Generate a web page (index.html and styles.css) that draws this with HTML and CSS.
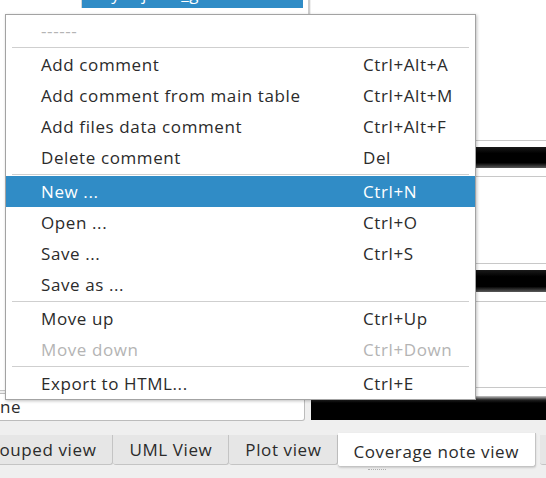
FILE: index.html
```html
<!DOCTYPE html>
<html>
<head>
<meta charset="utf-8">
<link rel="stylesheet" href="styles.css">
</head>
<body>
<div class="app">
  <div class="workspace">
    <div class="left">
      <div class="table">
        <div class="trow">
          <div class="cell c1">Status ▸</div>
          <div class="cell c2">Keyobjects_generator</div>
        </div>
      </div>
      <div class="field">ne</div>
    </div>
    <div class="right">
      <div class="blank h140"></div>
      <div class="rule"></div>
      <div class="blank h6"></div>
      <div class="bar h21"></div>
      <div class="blank h8"></div>
      <div class="rule"></div>
      <div class="blank h86"></div>
      <div class="rule"></div>
      <div class="blank h6"></div>
      <div class="bar h22"></div>
      <div class="blank h9"></div>
      <div class="rule"></div>
      <div class="blank h85"></div>
      <div class="rule"></div>
      <div class="blank h8"></div>
      <div class="bar bottom-bar"></div>
    </div>
  </div>
  <div class="tabs">
    <div class="tab first">Grouped view</div>
    <div class="tab">UML View</div>
    <div class="tab">Plot view</div>
    <div class="tab active">Coverage note view</div>
    <div class="tab">Text view</div>
  </div>
  <div class="handle"></div>

  <div class="menu">
    <div class="item disabled"><span>------</span><span></span></div>
    <div class="sep"></div>
    <div class="item"><span>Add comment</span><span>Ctrl+Alt+A</span></div>
    <div class="item"><span>Add comment from main table</span><span>Ctrl+Alt+M</span></div>
    <div class="item"><span>Add files data comment</span><span>Ctrl+Alt+F</span></div>
    <div class="item"><span>Delete comment</span><span>Del</span></div>
    <div class="sep"></div>
    <div class="item hot"><span>New ...</span><span>Ctrl+N</span></div>
    <div class="item"><span>Open ...</span><span>Ctrl+O</span></div>
    <div class="item"><span>Save ...</span><span>Ctrl+S</span></div>
    <div class="item"><span>Save as ...</span><span></span></div>
    <div class="sep"></div>
    <div class="item"><span>Move up</span><span>Ctrl+Up</span></div>
    <div class="item disabled"><span>Move down</span><span>Ctrl+Down</span></div>
    <div class="sep"></div>
    <div class="item"><span>Export to HTML...</span><span>Ctrl+E</span></div>
  </div>
</div>
</body>
</html>
```
FILE: styles.css
```css
* { box-sizing: border-box; }
html, body {
  margin: 0;
  padding: 0;
}
body {
  width: 546px;
  height: 478px;
  overflow: hidden;
  background: #efefef;
  font-family: "Open Sans", "Noto Sans", sans-serif;
  font-size: 17px;
  letter-spacing: 0.6px;
  color: #2b2b2b;
}
.app {
  position: relative;
  width: 546px;
  height: 478px;
  overflow: hidden;
}
.workspace {
  display: flex;
  height: 433px;
}
.left {
  width: 311px;
  display: flex;
  flex-direction: column;
}
.table {
  height: 391px;
  background: #fff;
  border-right: 2px solid #cdcdcd;
  border-bottom: 1px solid #c4c4c4;
  margin-right: 1px;
  overflow: hidden;
}
.trow {
  display: flex;
  height: 26px;
  margin-top: -18px;
}
.cell {
  height: 26px;
  line-height: 24px;
  white-space: nowrap;
  overflow: hidden;
}
.c1 {
  width: 82px;
  color: #b0b0b0;
  padding-left: 4px;
  border-right: 1px solid #d6d6d6;
}
.c2 {
  width: 221px;
  background: #308cc6;
  color: #fff;
  padding-left: 8px;
}
.field {
  margin-top: 2px;
  width: 305px;
  height: 28px;
  background: #fff;
  border: 1px solid #bcbcbc;
  border-left: none;
  border-radius: 0 3px 3px 0;
  line-height: 26px;
}
.right {
  flex: 1;
  display: flex;
  flex-direction: column;
}
.blank { background: #fff; }
.h140 { height: 140px; }
.h6 { height: 6px; }
.h8 { height: 8px; }
.h9 { height: 9px; }
.h86 { height: 86px; }
.h85 { height: 85px; }
.rule { height: 1px; background: #c8c8c8; }
.bar { background: linear-gradient(#1a1a1a, #000 30%, #000 75%, #5a5a5a); }
.h21 { height: 21px; }
.h22 { height: 22px; }
.bottom-bar {
  height: 24px;
  border-radius: 3px 0 0 0;
  background: linear-gradient(#c8c8c8, #202020 4px, #000 7px);
}

.tabs {
  display: flex;
  align-items: flex-start;
  height: 34px;
  margin-left: -38px;
}
.tab {
  margin-top: 2px;
  height: 30px;
  line-height: 30px;
  padding: 0 16px 0 16px;
  background: #e6e6e6;
  border: 1px solid #c4c4c4;
  border-top: none;
  border-left: none;
  border-radius: 0 0 3px 3px;
  white-space: nowrap;
  color: #2b2b2b;
}
.tab.first { border-left: 1px solid #c4c4c4; }
.tab.active {
  margin-top: 0;
  height: 34px;
  line-height: 37px;
  background: #fff;
  padding: 0 16px 0 15px;
  box-shadow: 0 1px 2px rgba(0,0,0,0.15);
  margin-right: 4px;
}
.handle {
  margin: 2px 0 0 368px;
  width: 18px;
  border-top: 1px dotted #b0b0b0;
}

.menu {
  position: absolute;
  left: 5px;
  top: 14px;
  width: 471px;
  background: #fff;
  border: 1px solid #a3a3a3;
  box-shadow: 1px 1px 3px rgba(0,0,0,0.25);
}
.item {
  display: grid;
  grid-template-columns: 322px auto;
  height: 31px;
  align-items: center;
  padding-left: 35px;
  white-space: nowrap;
  color: #2b2b2b;
}
.item.hot {
  background: #308cc6;
  color: #fff;
}
.item.disabled { color: #b4b4b4; }
.sep {
  height: 3px;
  margin: 0 6px;
  padding-top: 1px;
}
.sep::before {
  content: "";
  display: block;
  height: 1px;
  background: #cfcfcf;
}
```
